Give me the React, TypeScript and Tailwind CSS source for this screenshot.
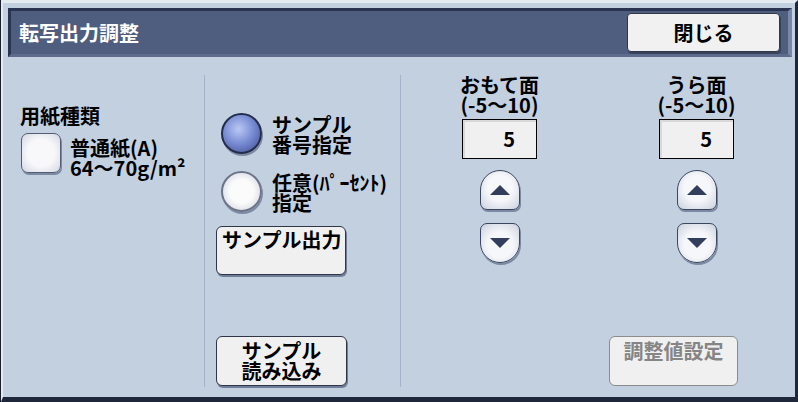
import React from "react";

const F = { fontFamily: '"Noto Sans CJK JP", "Noto Sans", sans-serif' };

function UpDown() {
  return (
    <div className="flex flex-col items-center">
      <div className="mt-[11px] w-[40px] h-[40px] rounded-t-[20px] rounded-b-[7px] border border-[#3c465e] bg-[radial-gradient(circle_at_50%_45%,#f6f7fa_45%,#c9d0de_100%)] shadow-[1px_2px_0_#7c89a3] flex items-center justify-center">
        <svg width="20" height="10" viewBox="0 0 20 10"><polygon points="10,0 20,10 0,10" fill="#323e5c" /></svg>
      </div>
      <div className="mt-[13px] w-[40px] h-[40px] rounded-b-[20px] rounded-t-[7px] border border-[#3c465e] bg-[radial-gradient(circle_at_50%_55%,#f6f7fa_45%,#c9d0de_100%)] shadow-[1px_2px_0_#7c89a3] flex items-center justify-center">
        <svg width="20" height="10" viewBox="0 0 20 10"><polygon points="0,0 20,0 10,10" fill="#323e5c" /></svg>
      </div>
    </div>
  );
}

function Side({ label }: { label: string }) {
  return (
    <div className="w-[197px] flex flex-col items-center">
      <div className="text-[20px] leading-[20px] font-bold text-black text-center">{label}</div>
      <div className="text-[20px] leading-[20px] font-bold text-black text-center">(-5〜10)</div>
      <div className="mt-[4px] w-[75px] h-[40px] border border-black bg-[#f0f0f0] shadow-[inset_2px_2px_0_#d8d8d8] flex items-center justify-end pr-[21px] text-[20px] font-bold text-black">
        5
      </div>
      <UpDown />
    </div>
  );
}

export default function App() {
  return (
    <div style={F} className="w-[798px] h-[402px] border-l border-[#1a2030]">
      <div className="w-[797px] h-[402px] bg-[#c2d0e0] border-t-[3px] border-l-[2px] border-[#e3eaf0] border-r-[3px] border-r-[#1f283a] border-b-[5px] border-b-[#1f283a] flex flex-col">
        {/* title bar */}
        <div className="ml-[5px] mr-[3px] mt-[5px] h-[49px] bg-[#4f5e7f] border-t-[3px] border-l-[3px] border-[#2a3350] border-b-[3px] border-b-[#5d6c8c] border-r-[4px] border-r-[#7a88a8] flex items-center justify-between">
          <div className="pl-[8px] text-white text-[20px] leading-[20px] font-bold">転写出力調整</div>
          <div className="mr-[8px] w-[153px] h-[39px] rounded-[4px] border border-[#2e3648] bg-[#f1f1f1] shadow-[1px_2px_0_#38425a] flex items-center justify-center text-[20px] font-bold text-black">
            閉じる
          </div>
        </div>
        {/* content */}
        <div className="mt-[18px] h-[312px] flex text-black">
          {/* left */}
          <div className="w-[201px] pl-[17px] pt-[31px]">
            <div className="text-[20px] leading-[20px] font-bold">用紙種類</div>
            <div className="mt-[7px] flex">
              <div className="ml-[1px] w-[40px] h-[40px] rounded-[7px] border border-[#545d74] bg-[radial-gradient(circle_at_50%_50%,#f8f8fa_50%,#d2d7e2_100%)] shadow-[1px_2px_0_#7c89a3]" />
              <div className="ml-[9px] mt-[5px] text-[20px] leading-[20px] font-bold">
                <div>普通紙(A)</div>
                <div>64〜70g/m²</div>
              </div>
            </div>
          </div>
          {/* middle */}
          <div className="w-[196px] border-l border-[#a3b3c7] flex flex-col pl-[11px]">
            <div className="mt-[38px] ml-[5px] flex">
              <div className="w-[41px] h-[41px] rounded-full border-2 border-[#242c4c] bg-[radial-gradient(circle_at_42%_38%,#b4c2f2_5%,#7488d0_50%,#3c4a88_100%)] shadow-[1px_2px_0_#7c89a3]" />
              <div className="ml-[10px] mt-[2px] text-[20px] leading-[20px] font-bold">
                <div>サンプル</div>
                <div>番号指定</div>
              </div>
            </div>
            <div className="mt-[16px] ml-[5px] flex">
              <div className="w-[41px] h-[41px] rounded-full border-2 border-[#6c7488] bg-[radial-gradient(circle_at_50%_50%,#fbfbfc_45%,#c8cdd9_100%)] shadow-[1px_2px_0_#7c89a3]" />
              <div className="ml-[10px] mt-[2px] text-[20px] leading-[20px] font-bold">
                <div>任意(ﾊﾟｰｾﾝﾄ)</div>
                <div>指定</div>
              </div>
            </div>
            <div className="mt-[13px] w-[130px] h-[49px] rounded-[6px] border border-[#2e3648] bg-[#f0f0f0] shadow-[1px_2px_0_#707d98] pl-[5px] pt-[3px] text-[20px] leading-[20px] font-bold">
              サンプル出力
            </div>
            <div className="mt-auto mb-[1px] w-[131px] h-[50px] rounded-[6px] border border-[#2e3648] bg-[#f0f0f0] shadow-[1px_2px_0_#707d98] pt-[4px] text-center text-[20px] leading-[20px] font-bold">
              <div>サンプル</div>
              <div>読み込み</div>
            </div>
          </div>
          {/* right */}
          <div className="flex-1 border-l border-[#a3b3c7] flex flex-col">
            <div className="flex">
              <Side label="おもて面" />
              <Side label="うら面" />
            </div>
            <div className="mt-auto mb-[1px] ml-[208px] w-[129px] h-[50px] rounded-[6px] border border-[#8c8c8c] bg-[#f0f0f0] pt-[4px] text-center text-[20px] leading-[20px] font-bold text-[#858585]">
              調整値設定
            </div>
          </div>
        </div>
      </div>
    </div>
  );
}
